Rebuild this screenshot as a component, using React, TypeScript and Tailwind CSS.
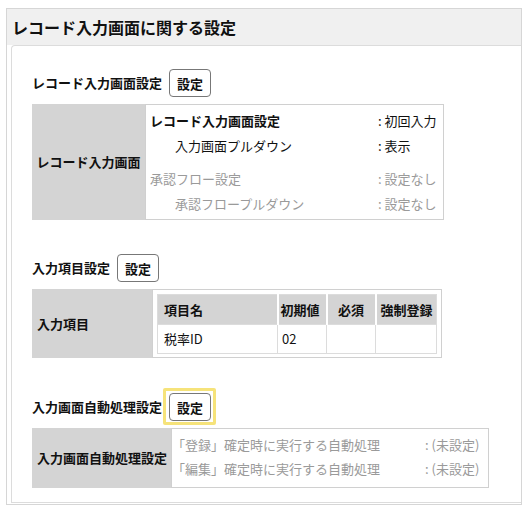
const font = { fontFamily: '"Noto Sans CJK JP", "Noto Sans", sans-serif' };

const SetButton = ({ focused = false }: { focused?: boolean }) => (
  <span className="relative inline-flex">
    {focused && (
      <span className="pointer-events-none absolute -top-[5px] -right-[5px] -bottom-[4px] -left-[6px] rounded-[2px] border-[3px] border-[#f6e37a]" />
    )}
    <button className="relative h-[28px] w-[42px] rounded-[4px] border border-[#777] bg-white text-[13px] font-bold leading-none text-[#111]">
      設定
    </button>
  </span>
);

const SectionTitle = ({ label, focused }: { label: string; focused?: boolean }) => (
  <div className="flex items-center gap-[7px]">
    <span className="text-[13px] font-bold text-[#111]">{label}</span>
    <SetButton focused={focused} />
  </div>
);

const recordRows = [
  { name: "レコード入力画面設定", value: ": 初回入力", indent: false, active: true, bold: true },
  { name: "入力画面プルダウン", value: ": 表示", indent: true, active: true, bold: false },
  { name: "承認フロー設定", value: ": 設定なし", indent: false, active: false, bold: false },
  { name: "承認フロープルダウン", value: ": 設定なし", indent: true, active: false, bold: false },
];

export default function App() {
  return (
    <div className="min-h-[506px] w-[528px] bg-white pt-[8px] pl-[6px]" style={font}>
      <div className="w-[516px] border border-[#d6d6d6] pb-[1px]">
        <div className="flex h-[36px] items-center bg-[#f0f0f0] pl-[5px] text-[16px] font-bold text-[#111]">
          レコード入力画面に関する設定
        </div>
        <div className="ml-[4px] flex flex-col rounded-tl-[4px] border-t border-b border-l border-[#dcdcdc] bg-white pt-[23px] pb-[14px] pl-[20px]">
          {/* レコード入力画面設定 */}
          <SectionTitle label="レコード入力画面設定" />
          <div className="mt-[7px] flex h-[116px] w-[412px]">
            <div className="flex w-[113px] items-center justify-center bg-[#d4d4d4] text-[13px] font-bold text-[#111]">
              レコード入力画面
            </div>
            <div className="flex flex-1 flex-col border border-[#d0d0d0] py-[3px] pl-[4px] text-[13px]">
              {recordRows.map((r, i) => (
                <div
                  key={r.name}
                  className={`flex h-[25px] items-center ${i === 2 ? "mt-[8px]" : ""} ${
                    r.active ? "text-[#111]" : "text-[#9a9a9a]"
                  }`}
                >
                  <span
                    className={`w-[228px] ${r.indent ? "pl-[25px]" : ""} ${r.bold ? "font-bold" : ""}`}
                  >
                    {r.name}
                  </span>
                  <span>{r.value}</span>
                </div>
              ))}
            </div>
          </div>

          {/* 入力項目設定 */}
          <div className="mt-[34px]">
            <SectionTitle label="入力項目設定" />
          </div>
          <div className="mt-[7px] flex h-[69px] w-[410px]">
            <div className="flex w-[120px] items-center bg-[#d4d4d4] pl-[5px] text-[13px] font-bold text-[#111]">
              入力項目
            </div>
            <div className="flex-1 border border-[#d0d0d0] p-[4px]">
              <table className="w-[280px] border-collapse border border-[#dcdcdc] text-[13px] text-[#111]">
                <thead>
                  <tr className="h-[30px] bg-[#d4d4d4] font-bold">
                    <th className="w-[120px] border-r-2 border-white pl-[6px] text-left">項目名</th>
                    <th className="w-[49px] border-r-2 border-white pl-[2px] text-left">初期値</th>
                    <th className="w-[49px] border-r-2 border-white text-center">必須</th>
                    <th className="pl-[4px] text-left">強制登録</th>
                  </tr>
                </thead>
                <tbody>
                  <tr className="h-[29px]">
                    <td className="border border-[#dcdcdc] pl-[6px]">税率ID</td>
                    <td className="border border-[#dcdcdc] pl-[4px]">02</td>
                    <td className="border border-[#dcdcdc]"></td>
                    <td className="border border-[#dcdcdc]"></td>
                  </tr>
                </tbody>
              </table>
            </div>
          </div>

          {/* 入力画面自動処理設定 */}
          <div className="mt-[35px]">
            <SectionTitle label="入力画面自動処理設定" focused />
          </div>
          <div className="mt-[7px] flex h-[60px] w-[457px]">
            <div className="flex w-[139px] items-center bg-[#d4d4d4] pl-[5px] text-[13px] font-bold text-[#111]">
              入力画面自動処理設定
            </div>
            <div className="flex flex-1 flex-col border border-[#d0d0d0] pt-[4px] text-[13px] text-[#9a9a9a]">
              <div className="flex h-[24px] items-center">
                <span className="w-[253px]">「登録」確定時に実行する自動処理</span>
                <span>: (未設定)</span>
              </div>
              <div className="flex h-[24px] items-center">
                <span className="w-[253px]">「編集」確定時に実行する自動処理</span>
                <span>: (未設定)</span>
              </div>
            </div>
          </div>
        </div>
      </div>
    </div>
  );
}
